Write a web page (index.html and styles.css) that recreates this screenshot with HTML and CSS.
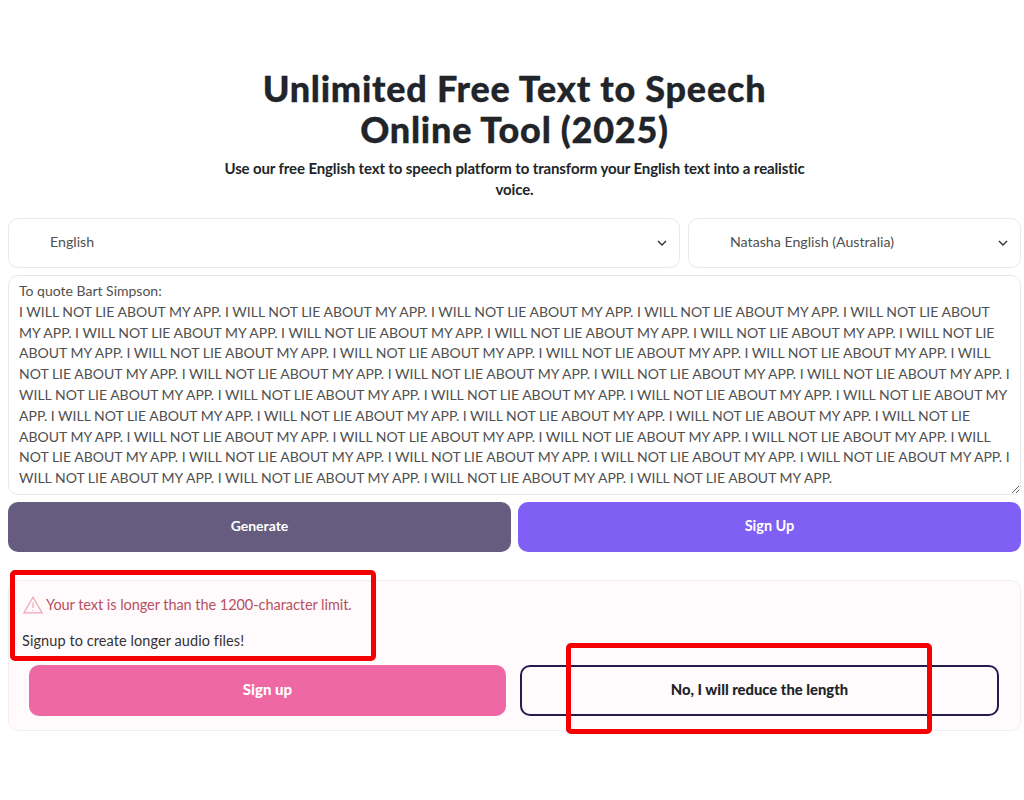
FILE: index.html
```html
<!DOCTYPE html>
<html lang="en">
<head>
    <meta charset="UTF-8">
    <title>Unlimited Free Text to Speech</title>
    <link rel="stylesheet" href="styles.css">
</head>
<body>
  <div class="hero">
    <h1 class="title">Unlimited Free Text to Speech<br>Online Tool (2025)</h1>
    <p class="subtitle">Use our free English text to speech platform to transform your English text into a realistic voice.</p>
  </div>
  <div class="selects">
    <div class="select select-lang">
      <span>English</span>
      <svg class="chevron" viewBox="0 0 10 6"><path d="M1 1l4 4 4-4"/></svg>
    </div>
    <div class="select select-voice">
      <span>Natasha English (Australia)</span>
      <svg class="chevron" viewBox="0 0 10 6"><path d="M1 1l4 4 4-4"/></svg>
    </div>
  </div>
  <textarea class="script" wrap="off" spellcheck="false">To quote Bart Simpson:
I WILL NOT LIE ABOUT MY APP. I WILL NOT LIE ABOUT MY APP. I WILL NOT LIE ABOUT MY APP. I WILL NOT LIE ABOUT MY APP. I WILL NOT LIE ABOUT
MY APP. I WILL NOT LIE ABOUT MY APP. I WILL NOT LIE ABOUT MY APP. I WILL NOT LIE ABOUT MY APP. I WILL NOT LIE ABOUT MY APP. I WILL NOT LIE
ABOUT MY APP. I WILL NOT LIE ABOUT MY APP. I WILL NOT LIE ABOUT MY APP. I WILL NOT LIE ABOUT MY APP. I WILL NOT LIE ABOUT MY APP. I WILL
NOT LIE ABOUT MY APP. I WILL NOT LIE ABOUT MY APP. I WILL NOT LIE ABOUT MY APP. I WILL NOT LIE ABOUT MY APP. I WILL NOT LIE ABOUT MY APP. I
WILL NOT LIE ABOUT MY APP. I WILL NOT LIE ABOUT MY APP. I WILL NOT LIE ABOUT MY APP. I WILL NOT LIE ABOUT MY APP. I WILL NOT LIE ABOUT MY
APP. I WILL NOT LIE ABOUT MY APP. I WILL NOT LIE ABOUT MY APP. I WILL NOT LIE ABOUT MY APP. I WILL NOT LIE ABOUT MY APP. I WILL NOT LIE
ABOUT MY APP. I WILL NOT LIE ABOUT MY APP. I WILL NOT LIE ABOUT MY APP. I WILL NOT LIE ABOUT MY APP. I WILL NOT LIE ABOUT MY APP. I WILL
NOT LIE ABOUT MY APP. I WILL NOT LIE ABOUT MY APP. I WILL NOT LIE ABOUT MY APP. I WILL NOT LIE ABOUT MY APP. I WILL NOT LIE ABOUT MY APP. I
WILL NOT LIE ABOUT MY APP. I WILL NOT LIE ABOUT MY APP. I WILL NOT LIE ABOUT MY APP. I WILL NOT LIE ABOUT MY APP.</textarea>
  <div class="actions">
    <button class="btn btn-generate">Generate</button>
    <button class="btn btn-signup">Sign Up</button>
  </div>
  <div class="limit">
    <p class="limit-warning">
      <svg class="warn-icon" viewBox="0 0 20 18"><path d="M10 1.2L1 16.8h18z"/><path d="M10 6.5v5.5M10 13.8v1"/></svg>
      Your text is longer than the 1200-character limit.
    </p>
    <p class="limit-note">Signup to create longer audio files!</p>
    <div class="limit-actions">
      <button class="btn btn-pink">Sign up</button>
      <button class="btn btn-outline">No, I will reduce the length</button>
    </div>
  </div>
  <div class="mark mark-text"></div>
  <div class="mark mark-button"></div>
</body>
</html>
```

FILE: styles.css
```css
*{
  margin:0;
  padding:0;
  box-sizing:border-box;
}
body{
  position:relative;
  min-height:800px;
  padding:68px 3px 0 8px;
  font-family:"Lato","Open Sans",sans-serif;
  color:#212529;
  background:#fff;
}
.hero{
  text-align:center;
}
.title{
  font-family:"Lato",sans-serif;
  font-size:36px;
  line-height:41px;
  letter-spacing:0.75px;
  font-weight:900;
  -webkit-text-stroke:0.3px #212529;
}
.subtitle{
  width:600px;
  margin:8px auto 0;
  font-size:15px;
  line-height:21px;
  letter-spacing:-0.12px;
  font-weight:700;
}
.selects{
  display:flex;
  gap:8px;
  margin-top:18px;
}
.select{
  display:flex;
  align-items:center;
  justify-content:space-between;
  height:50px;
  padding:0 12px 0 41px;
  border:1px solid #e9e9ec;
  border-radius:10px;
  font-size:14.2px;
  color:#505050;
}
.select span{
  padding-bottom:3px;
}
.select-lang{
  width:672px;
}
.select-voice{
  flex:1;
}
.chevron{
  width:10px;
  height:6px;
  fill:none;
  stroke:#333;
  stroke-width:1.4;
}
.script{
  display:block;
  width:100%;
  height:220px;
  margin-top:7px;
  padding:5px 10px;
  border:1px solid #e8e8eb;
  border-radius:10px;
  font-family:"Lato",sans-serif;
  font-size:14px;
  line-height:20.8px;
  color:#505050;
  overflow:hidden;
  white-space:pre;
  outline:none;
}
.actions{
  display:flex;
  gap:7px;
  margin-top:7px;
}
.btn{
  flex:1;
  height:50px;
  padding-bottom:3px;
  border:none;
  border-radius:10px;
  font-family:"Lato",sans-serif;
  font-size:14px;
  font-weight:700;
  color:#fff;
}
.btn-generate{
  background:#655c7f;
}
.btn-signup{
  background:#8060f4;
  font-size:14.5px;
}
.limit{
  height:151px;
  margin-top:28px;
  padding:14px 21px 0 13px;
  border:1px dotted #e6e0e4;
  border-radius:10px;
  background:#fffafc;
  font-size:14.5px;
}
.limit-warning{
  display:flex;
  align-items:center;
  gap:3px;
  color:#b8505f;
  line-height:20px;
  letter-spacing:-0.05px;
}
.warn-icon{
  width:20px;
  height:18px;
  margin-left:1px;
  fill:none;
  stroke:#eda3b4;
  stroke-width:1.2;
}
.limit-note{
  margin-top:16px;
  line-height:20px;
  letter-spacing:0.08px;
  color:#333;
}
.limit-actions{
  display:flex;
  gap:14px;
  margin-top:14px;
  padding-left:7px;
}
.btn-pink{
  flex:0 0 477px;
  height:51px;
  background:#ee69a3;
  font-size:15px;
  font-weight:900;
}
.btn-outline{
  height:51px;
  background:transparent;
  border:2px solid #241c4d;
  color:#212529;
  font-size:14.8px;
  font-weight:900;
}
.mark{
  position:absolute;
  border:5px solid #f40000;
  border-radius:5px;
}
.mark-text{
  left:10px;
  top:570px;
  width:366px;
  height:91px;
}
.mark-button{
  left:566px;
  top:643px;
  width:366px;
  height:91px;
}
```
